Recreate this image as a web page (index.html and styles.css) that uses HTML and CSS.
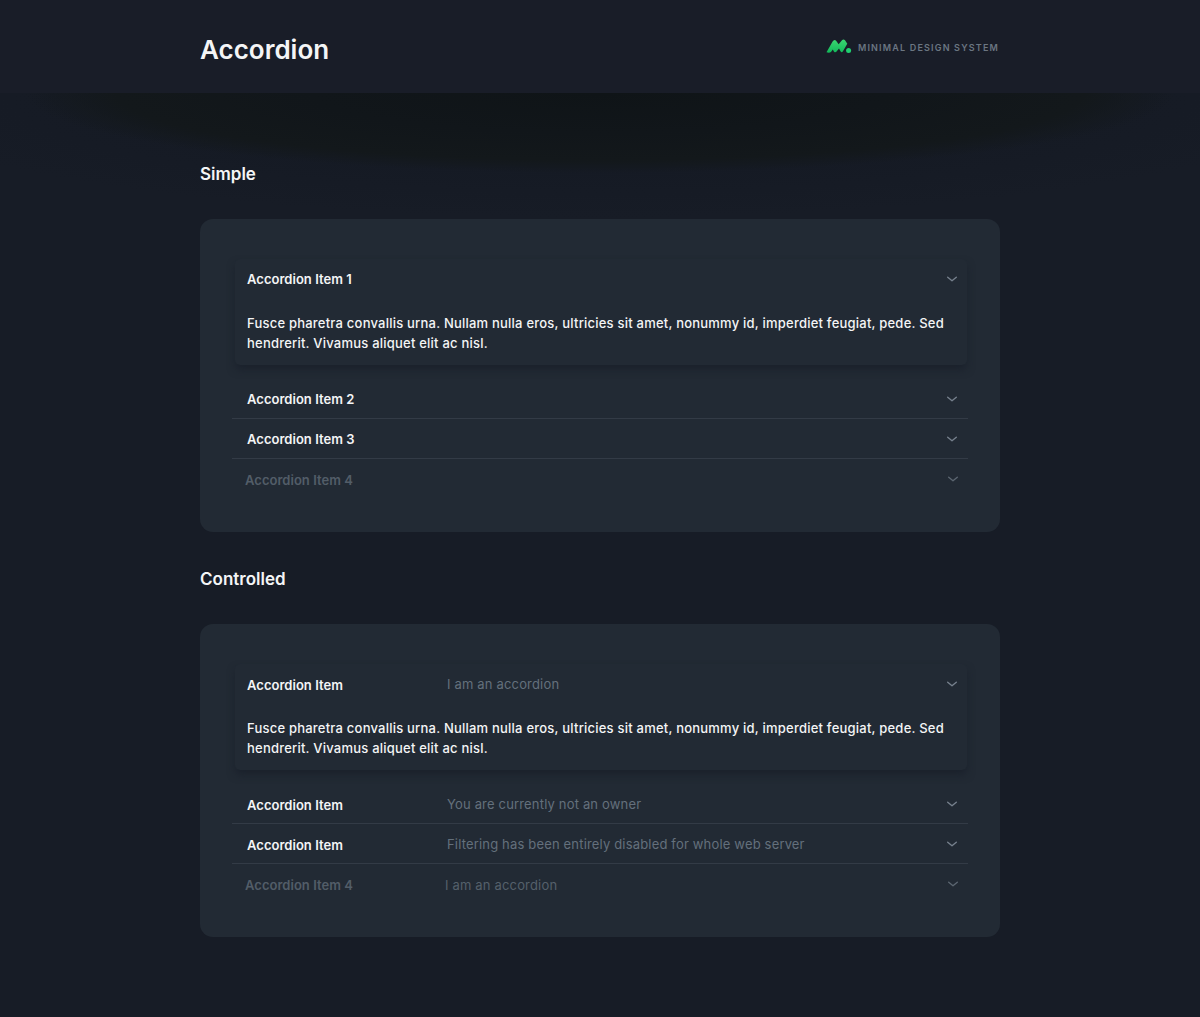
FILE: index.html
```html
<!DOCTYPE html>
<html lang="en">
<head>
<meta charset="utf-8">
<title>Accordion</title>
<link rel="stylesheet" href="styles.css">
</head>
<body>
<svg width="0" height="0" class="defs" aria-hidden="true">
  <symbol id="chevron" viewBox="0 0 12 8"><path d="M1.7 2.3 L6 5.7 L10.3 2.3" fill="none" stroke="currentColor" stroke-width="1.4" stroke-linecap="round" stroke-linejoin="round"/></symbol>
</svg>
<header class="header">
  <h1 class="title">Accordion</h1>
  <div class="brand">
    <svg class="logo" viewBox="0 0 26 15" width="26" height="15" aria-hidden="true">
      <defs><linearGradient id="g" x1="0" y1="0" x2="0" y2="1"><stop offset="0" stop-color="#3bd671"/><stop offset="1" stop-color="#12b95a"/></linearGradient></defs>
      <path d="M0.5 13.2 L6.6 2.6 Q8.3 -0.4 10.3 2 L12.6 5.2 L16.2 1.1 Q17.6 0 19 1.3 L21.3 4.8 L16.8 12.4 Q15.6 14 14.5 12.2 L13 9.4 L10.6 12.6 Q9.2 14.2 7.9 12.4 L6.8 10.5 L5.4 12.4 Q3.6 14.4 0.5 13.2Z" fill="url(#g)"/>
      <circle cx="22.6" cy="11.4" r="2.5" fill="#20d070"/>
    </svg>
    <span class="brand-name">MINIMAL DESIGN SYSTEM</span>
  </div>
</header>
<main class="main">
  <section class="section">
    <h2 class="heading">Simple</h2>
    <div class="card">
      <div class="item open">
        <div class="summary"><span class="name">Accordion Item 1</span><svg class="chev"><use href="#chevron"/></svg></div>
        <p class="details">Fusce pharetra convallis urna. Nullam nulla eros, ultricies sit amet, nonummy id, imperdiet feugiat, pede. Sed<br>hendrerit. Vivamus aliquet elit ac nisl.</p>
      </div>
      <div class="item"><div class="summary"><span class="name">Accordion Item 2</span><svg class="chev"><use href="#chevron"/></svg></div></div>
      <div class="item"><div class="summary"><span class="name">Accordion Item 3</span><svg class="chev"><use href="#chevron"/></svg></div></div>
      <div class="item disabled"><div class="summary"><span class="name">Accordion Item 4</span><svg class="chev"><use href="#chevron"/></svg></div></div>
    </div>
  </section>
  <section class="section controlled">
    <h2 class="heading">Controlled</h2>
    <div class="card">
      <div class="item open">
        <div class="summary"><span class="name">Accordion Item</span><span class="note">I am an accordion</span><svg class="chev"><use href="#chevron"/></svg></div>
        <p class="details">Fusce pharetra convallis urna. Nullam nulla eros, ultricies sit amet, nonummy id, imperdiet feugiat, pede. Sed<br>hendrerit. Vivamus aliquet elit ac nisl.</p>
      </div>
      <div class="item"><div class="summary"><span class="name">Accordion Item</span><span class="note">You are currently not an owner</span><svg class="chev"><use href="#chevron"/></svg></div></div>
      <div class="item"><div class="summary"><span class="name">Accordion Item</span><span class="note">Filtering has been entirely disabled for whole web server</span><svg class="chev"><use href="#chevron"/></svg></div></div>
      <div class="item disabled"><div class="summary"><span class="name">Accordion Item 4</span><span class="note">I am an accordion</span><svg class="chev"><use href="#chevron"/></svg></div></div>
    </div>
  </section>
</main>
</body>
</html>
```
FILE: styles.css
```css
* { box-sizing: border-box; }
html, body { margin: 0; padding: 0; }
body {
  min-height: 1017px;
  background: #171c26;
  color: #f4f5f6;
  font-family: Inter, "Liberation Sans", sans-serif;
}
h1, h2, p { margin: 0; }
.defs { display: block; height: 0; }

.header {
  height: 93px;
  padding: 0 201px 0 200px;
  display: flex;
  justify-content: space-between;
  background: #191d28;
}
.title { font-size: 26px; line-height: 32px; font-weight: 600; padding-top: 34px; }
.brand { display: flex; align-items: center; height: 16px; margin-top: 38px; gap: 6px; }
.logo { display: block; }
.brand-name { font-size: 9px; font-weight: 600; letter-spacing: 1.18px; color: #6b7682; padding-top: 3px; white-space: nowrap; }

/* The dark ellipse is the shadow that the header throws on the page. */
.main {
  min-height: 924px;
  padding: 66px 200px 0;
  background:
    radial-gradient(ellipse 575px 80px at 50% 0, #0f1417 0, #11161a 50%, #13181b 84%, rgba(20, 25, 31, 0) 100%) no-repeat,
    radial-gradient(ellipse 740px 125px at 50% 0, #151a24 60%, rgba(21, 26, 36, 0) 100%) no-repeat,
    #171c26;
}
.heading { height: 30px; line-height: 30px; font-size: 17px; font-weight: 600; margin-bottom: 30px; white-space: nowrap; }
.controlled { margin-top: 32px; }

.card {
  height: 313px;
  padding: 40px 32px 0;
  border-radius: 13px;
  background: #222a34;
}
.item { height: 40px; padding: 0 10px 0 15px; border-bottom: 1px solid #333b46; }
.item.open {
  height: 106px;
  margin: 0 1px 14px 3px;
  padding: 0 9px 0 12px;
  border: 0;
  border-radius: 5px;
  background: #222a34;
  box-shadow: 0 5px 8px -1px rgba(22, 27, 38, .65);
}
.item.disabled { border: 0; padding: 1px 9px 0 13px; color: #525d68; }
.summary { display: flex; align-items: center; height: 40px; font-size: 13px; white-space: nowrap; }
.name { flex: 0 0 200px; font-weight: 600; letter-spacing: .03px; }
.controlled .item:not(.disabled) .name { padding-top: 2px; }
.note { color: #64707c; letter-spacing: .17px; }
.disabled .note { color: #55606b; }
.chev { width: 12px; height: 8px; margin-left: auto; color: #77818d; }
.disabled .chev { color: #5c6671; margin-top: -2px; }
.details { padding-top: 14px; font-size: 13px; line-height: 20px; font-weight: 500; letter-spacing: .22px; white-space: nowrap; }
```
